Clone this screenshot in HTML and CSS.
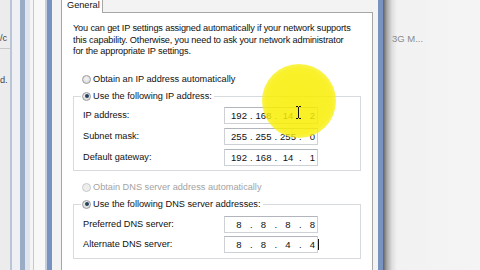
FILE: index.html
```html
<!DOCTYPE html>
<html>
<head>
<meta charset="utf-8">
<link rel="stylesheet" href="styles.css">
</head>
<body>
<div class="screen">
  <div class="bgleft">
    <div class="pane">
      <div class="frag f1">/c</div>
      <div class="hline"></div>
      <div class="frag f2">d.</div>
    </div>
  </div>
  <div class="dialog">
    <div class="tabs"><div class="tab">General</div></div>
    <div class="panel">
      <p class="intro">You can get IP settings assigned automatically if your network supports<br>this capability. Otherwise, you need to ask your network administrator<br>for the appropriate IP settings.</p>
      <div class="radio-row r-first"><span class="radio"></span>Obtain an IP address automatically</div>
      <div class="group g-ip">
        <div class="legend"><span class="radio checked"></span>Use the following IP address:</div>
        <div class="rows">
          <div class="row"><span class="label">IP address:</span><div class="ip"><span>192</span><i>.</i><span>168</span><i>.</i><span>14</span><i>.</i><span>2</span></div></div>
          <div class="row"><span class="label">Subnet mask:</span><div class="ip"><span>255</span><i>.</i><span>255</span><i>.</i><span>255</span><i>.</i><span>0</span></div></div>
          <div class="row"><span class="label">Default gateway:</span><div class="ip"><span>192</span><i>.</i><span>168</span><i>.</i><span>14</span><i>.</i><span>1</span></div></div>
        </div>
      </div>
      <div class="radio-row r-dns disabled"><span class="radio"></span>Obtain DNS server address automatically</div>
      <div class="group g-dns">
        <div class="legend"><span class="radio checked"></span>Use the following DNS server addresses:</div>
        <div class="rows">
          <div class="row"><span class="label">Preferred DNS server:</span><div class="ip"><span>8</span><i>.</i><span>8</span><i>.</i><span>8</span><i>.</i><span>8</span></div></div>
          <div class="row"><span class="label">Alternate DNS server:</span><div class="ip"><span>8</span><i>.</i><span>8</span><i>.</i><span>4</span><i>.</i><span>4<b class="caret"></b></span></div></div>
        </div>
      </div>
    </div>
  </div>
  <div class="bgright"><span class="net">3G M...</span></div>
  <div class="highlight"></div>
  <svg class="ibeam" width="7" height="13" viewBox="0 0 7 13"><path d="M1 0.5h2M4 0.5h2M3.5 1v11M1 12.5h2M4 12.5h2" stroke="#111" stroke-width="1" fill="none"/></svg>
</div>
</body>
</html>
```

FILE: styles.css
```css
html, body {
  margin: 0;
  padding: 0;
}
body {
  width: 480px;
  height: 270px;
  overflow: hidden;
  font-family: "Liberation Sans", Arial, sans-serif;
  font-size: 9.2px;
  color: #111;
  background: #f3f3f3;
}
.screen {
  position: relative;
  display: flex;
  width: 480px;
  height: 270px;
  overflow: hidden;
}
.bgleft {
  width: 47px;
  flex: none;
  background: linear-gradient(to right,
    #ececec 0 10px, #b9c6d8 10px 12px, #eef0f3 12px 20px,
    #9badc6 20px 25px, #dfe5ec 25px 30px, #f4f4f4 30px 33px,
    #c9c9c9 33px 34px, #f8f8f8 34px 45px, #c3cedf 45px 47px);
}
.pane {
  width: 10px;
  overflow: hidden;
  color: #444;
}
.frag {
  height: 11px;
  line-height: 11px;
  white-space: nowrap;
}
.f1 { margin-top: 33px; }
.hline {
  margin-top: 4px;
  height: 1px;
  background: #c8c8c8;
}
.f2 { margin-top: 26px; }

.dialog {
  width: 336px;
  flex: none;
  box-sizing: border-box;
  border-left: 5px solid #7893c0;
  border-right: 5px solid #7893c0;
  background: #f3f3f3;
  padding: 0 5px 0 9px;
}
.tabs {
  height: 12px;
  display: flex;
}
.tab {
  position: relative;
  z-index: 1;
  margin-top: -3px;
  height: 16px;
  box-sizing: border-box;
  padding: 0 5px;
  border: 1px solid #a7a7a7;
  border-bottom: none;
  background: #fff;
  line-height: 15px;
  width: 42px;
}
.panel {
  height: 300px;
  background: #fff;
  border: 1px solid #a7a7a7;
  padding: 10px 11px 0 11px;
}
.intro {
  margin: 0;
  line-height: 11.5px;
  white-space: nowrap;
  letter-spacing: -0.16px;
}
.radio-row {
  display: flex;
  align-items: center;
  height: 14px;
  padding-left: 9px;
  white-space: nowrap;
}
.r-first { margin-top: 14.5px; }
.r-dns { margin-top: 9px; }
.disabled { color: #a3a3a3; }
.radio {
  width: 9px;
  height: 9px;
  flex: none;
  box-sizing: border-box;
  border-radius: 50%;
  border: 1px solid #9c9c9c;
  background: radial-gradient(circle at 50% 40%, #f7f7f7 0, #dcdcdc 70%);
  margin-right: 2px;
  display: flex;
  align-items: center;
  justify-content: center;
}
.disabled .radio {
  border-color: #c8c8c8;
  background: #eeeeee;
}
.radio.checked::after {
  content: "";
  width: 4px;
  height: 4px;
  border-radius: 50%;
  background: #24425a;
}
.group {
  border: 1px solid #d7dbe0;
  margin-top: 10px;
}
.legend {
  display: flex;
  align-items: center;
  width: max-content;
  height: 14px;
  margin-top: -8px;
  margin-left: 7px;
  padding: 0 2px 0 1px;
  background: #fff;
  white-space: nowrap;
}
.rows { padding-left: 9px; }
.g-ip .rows { margin-top: 1.5px; padding-bottom: 2.5px; }
.g-dns .rows { margin-top: 3px; padding-bottom: 4px; }
.row {
  display: flex;
  align-items: center;
  height: 21px;
}
.g-dns .row { height: 20px; }
.label {
  width: 141px;
  flex: none;
  white-space: nowrap;
}
.ip {
  width: 94px;
  height: 17px;
  box-sizing: border-box;
  border: 1px solid #cdd1d6;
  border-top-color: #b2b5bb;
  display: grid;
  grid-template-columns: 18px 6.5px 18px 6.5px 18px 6.5px 18px;
  align-items: center;
  padding-left: 5px;
  font-size: 9.5px;
}
.ip span { text-align: center; position: relative; }
.ip i {
  font-style: normal;
  text-align: center;
}
.caret {
  position: absolute;
  right: 3px;
  top: 0;
  width: 1px;
  height: 11px;
  background: #111;
}
.bgright {
  flex: 1;
  background: linear-gradient(to right, #5f5f5f 0, #a9a9a9 4px, #dedede 9px, #f2f2f2 14px, #f4f4f4 100%);
  padding: 33px 0 0 9px;
  color: #8a8a8a;
  font-size: 9.5px;
  line-height: 11px;
  white-space: nowrap;
}
.highlight {
  position: absolute;
  left: 262px;
  top: 64px;
  width: 74px;
  height: 74px;
  border-radius: 50%;
  background: radial-gradient(circle, rgba(248,238,0,0.86) 0, rgba(248,238,0,0.84) 62%, rgba(250,242,30,0.55) 84%, rgba(255,250,120,0) 100%);
  pointer-events: none;
}
.ibeam {
  position: absolute;
  left: 295px;
  top: 106px;
}
```
